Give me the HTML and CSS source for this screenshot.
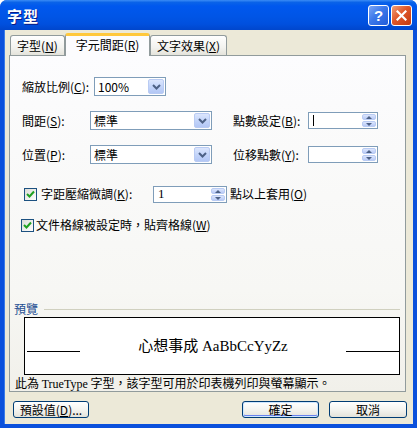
FILE: index.html
```html
<!DOCTYPE html>
<html lang="zh-Hant">
<head>
<meta charset="utf-8">
<title>字型</title>
<link rel="stylesheet" href="styles.css">
</head>
<body>
<div class="window">
  <div class="titlebar">
    <span class="title">字型</span>
    <div class="tbtns">
      <span class="tb help">?</span>
      <span class="tb close"><svg width="11" height="11" viewBox="0 0 11 11"><path d="M1.5 1.5 L9.5 9.5 M9.5 1.5 L1.5 9.5" stroke="#fff" stroke-width="2.2" stroke-linecap="square"/></svg></span>
    </div>
  </div>
  <div class="client">
    <div class="tabs">
      <div class="tab t1">字型(<u>N</u>)</div>
      <div class="tab t2 active">字元間距(<u>R</u>)</div>
      <div class="tab t3">文字效果(<u>X</u>)</div>
    </div>
    <div class="panel">
      <div class="row r1">
        <span class="lbl w72">縮放比例(<u>C</u>):</span>
        <div class="combo c-small"><span class="val">100%</span><span class="dd"><svg width="9" height="6" viewBox="0 0 9 6"><path d="M1 1 L4.5 4.5 L8 1" fill="none" stroke="#4D6185" stroke-width="2"/></svg></span></div>
      </div>
      <div class="row r2">
        <span class="lbl w68">間距(<u>S</u>):</span>
        <div class="combo c-wide"><span class="val">標準</span><span class="dd"><svg width="9" height="6" viewBox="0 0 9 6"><path d="M1 1 L4.5 4.5 L8 1" fill="none" stroke="#4D6185" stroke-width="2"/></svg></span></div>
        <span class="lbl w75 gapl">點數設定(<u>B</u>):</span>
        <div class="spin s-right"><span class="val"><span class="caret"></span></span><span class="sb"><span class="up"></span><span class="dn"></span></span></div>
      </div>
      <div class="row r3">
        <span class="lbl w68">位置(<u>P</u>):</span>
        <div class="combo c-wide"><span class="val">標準</span><span class="dd"><svg width="9" height="6" viewBox="0 0 9 6"><path d="M1 1 L4.5 4.5 L8 1" fill="none" stroke="#4D6185" stroke-width="2"/></svg></span></div>
        <span class="lbl w75 gapl">位移點數(<u>Y</u>):</span>
        <div class="spin s-right"><span class="val"></span><span class="sb"><span class="up"></span><span class="dn"></span></span></div>
      </div>
      <div class="row r4">
        <span class="chk"><svg width="9" height="9" viewBox="0 0 9 9"><path d="M1 4 L3.5 6.5 L8 1.5" fill="none" stroke="#21A121" stroke-width="2"/></svg></span>
        <span class="lbl w114">字距壓縮微調(<u>K</u>):</span>
        <div class="spin s-kern"><span class="val">1</span><span class="sb"><span class="up"></span><span class="dn"></span></span></div>
        <span class="lbl after">點以上套用(<u>O</u>)</span>
      </div>
      <div class="row r5">
        <span class="chk"><svg width="9" height="9" viewBox="0 0 9 9"><path d="M1 4 L3.5 6.5 L8 1.5" fill="none" stroke="#21A121" stroke-width="2"/></svg></span>
        <span class="lbl">文件格線被設定時，貼齊格線(<u>W</u>)</span>
      </div>
      <div class="pvhead">
        <span class="pvtitle">預覽</span>
        <span class="pvline"></span>
      </div>
      <div class="pvbox">
        <span class="bl left"></span>
        <span class="pvtext">心想事成 AaBbCcYyZz</span>
        <span class="bl right"></span>
      </div>
      <div class="footer">此為 <span class="tt">TrueType</span> 字型，該字型可用於印表機列印與螢幕顯示。</div>
    </div>
    <div class="buttons">
      <span class="btn b-def">預設值(<u>D</u>)...</span>
      <span class="spacer"></span>
      <span class="btn b-ok">確定</span>
      <span class="btn b-cancel">取消</span>
    </div>
  </div>
</div>
</body>
</html>
```

FILE: styles.css
```css
* { box-sizing: border-box; }
html, body {
  margin: 0;
  padding: 0;
  background: #fff;
}
body {
  font-family: "Noto Sans CJK TC", "Noto Sans", sans-serif;
  font-size: 12px;
  color: #000;
}
u { text-decoration: underline; text-underline-offset: 1px; }

.window {
  width: 417px;
  height: 428px;
  background: #0A50DC;
  border-radius: 7px 7px 0 0;
  display: flex;
  flex-direction: column;
  overflow: hidden;
}
.titlebar {
  height: 30px;
  flex: none;
  display: flex;
  align-items: center;
  padding: 0 5px 0 7px;
  background: linear-gradient(#3B8CF5 0%, #0A63E8 8%, #0058EE 20%, #0055E6 55%, #0050DE 80%, #0046CC 100%);
}
.title {
  color: #fff;
  font-weight: bold;
  font-size: 15px;
  letter-spacing: 1px;
  text-shadow: 1px 1px 0 #0A1883;
  flex: 1;
}
.tbtns { display: flex; gap: 2px; }
.tb {
  width: 21px;
  height: 21px;
  border: 1px solid #fff;
  border-radius: 3px;
  display: flex;
  align-items: center;
  justify-content: center;
  color: #fff;
  font-family: "Liberation Sans", sans-serif;
  font-weight: bold;
  font-size: 15px;
}
.help { background: linear-gradient(135deg, #7BA6F5 0%, #3C78EA 45%, #215CD9 100%); }
.close { background: linear-gradient(135deg, #F0A07A 0%, #E0572A 45%, #C23A10 100%); }

.client {
  flex: 1;
  margin: 0 4px 4px 4px;
  background: #ECE9D8;
  display: flex;
  flex-direction: column;
  border-left: 1px solid #3A7BE8;
}

.tabs {
  height: 26px;
  display: flex;
  align-items: flex-end;
  padding-left: 5px;
  margin-bottom: -1px;
  position: relative;
  z-index: 2;
}
.tab {
  height: 20px;
  border: 1px solid #919B9C;
  border-bottom: none;
  border-radius: 3px 3px 0 0;
  background: linear-gradient(#FFFFFF, #F3F3EF 60%, #E4E3DB);
  display: flex;
  align-items: center;
  justify-content: center;
  line-height: 14px;
  margin-bottom: 1px;
}
.t1 { width: 55px; }
.t2 { width: 85px; }
.t3 { width: 77px; }
.tab.active {
  height: 23px;
  margin-bottom: 0;
  background: #FCFCFE;
  border-top: 3px solid #FFC83C;
  padding-bottom: 2px;
  box-shadow: inset 0 0 0 0 transparent;
}

.panel {
  margin-left: 4px;
  width: 397px;
  height: 337px;
  border: 1px solid #919B9C;
  background: linear-gradient(#FCFCFE, #F7F7F4 70%, #F1F0EA);
  display: flex;
  flex-direction: column;
  position: relative;
  z-index: 1;
}

.row {
  display: flex;
  align-items: center;
  padding-left: 12px;
  line-height: 14px;
}
.r1 { margin-top: 21px; height: 19px; }
.r2 { margin-top: 15px; height: 19px; }
.r3 { margin-top: 15px; height: 19px; }
.r4 { margin-top: 21px; height: 18px; padding-left: 14px; }
.r5 { margin-top: 14px; height: 16px; padding-left: 11px; }

.lbl { white-space: nowrap; }
.w72 { width: 72px; }
.w68 { width: 68px; }
.w75 { width: 75px; }
.w114 { width: 114px; padding-left: 2px; }
.gapl { margin-left: 21px; }
.after { margin-left: 3px; }

.combo {
  height: 19px;
  border: 1px solid #7F9DB9;
  background: #fff;
  display: flex;
  align-items: stretch;
  padding: 1px;
}
.c-small { width: 72px; }
.c-wide { width: 122px; }
.combo .val {
  flex: 1;
  padding-left: 2px;
  display: flex;
  align-items: center;
}
.dd {
  width: 16px;
  border: 1px solid #B9CBF3;
  border-radius: 2px;
  background: linear-gradient(#DCE6FD, #C4D5FA 50%, #B3C7F5);
  display: flex;
  align-items: center;
  justify-content: center;
}

.spin {
  height: 17px;
  border: 1px solid #7F9DB9;
  background: #fff;
  display: flex;
  align-items: stretch;
  padding: 1px;
}
.s-right { width: 70px; }
.s-kern { width: 74px; }
.spin .val {
  flex: 1;
  padding-left: 3px;
  display: flex;
  align-items: center;
  font-family: "Liberation Serif", serif;
  font-size: 13px;
}
.caret {
  width: 1px;
  height: 11px;
  background: #000;
}
.sb {
  width: 14px;
  display: flex;
  flex-direction: column;
  gap: 1px;
}
.sb span {
  flex: 1;
  border: 1px solid #B9CBF3;
  border-radius: 2px;
  background: linear-gradient(#DCE6FD, #B8CAF6);
  position: relative;
}
.sb .up::after, .sb .dn::after {
  content: "";
  position: absolute;
  left: 3px;
  width: 0;
  height: 0;
  border-left: 3px solid transparent;
  border-right: 3px solid transparent;
}
.sb .up::after { top: 1px; border-bottom: 3px solid #4D6185; }
.sb .dn::after { top: 1px; border-top: 3px solid #4D6185; }

.chk {
  width: 13px;
  height: 13px;
  flex: none;
  border: 1px solid #1C5180;
  background: linear-gradient(135deg, #DCDCD7, #FFFFFF);
  display: flex;
  align-items: center;
  justify-content: center;
  margin-right: 2px;
}

.pvhead {
  margin-top: 69px;
  height: 14px;
  display: flex;
  align-items: center;
  padding-left: 4px;
  padding-right: 5px;
  line-height: 14px;
}
.pvtitle { color: #1F4F92; }
.pvline {
  flex: 1;
  height: 1px;
  background: #D0D0BF;
  margin-left: 6px;
}
.pvbox {
  margin: 1px 5px 0 14px;
  height: 58px;
  border: 1px solid #000;
  background: #fff;
  display: flex;
  align-items: center;
}
.pvtext {
  flex: 1;
  text-align: center;
  font-family: "Liberation Serif", "Noto Sans CJK TC", serif;
  font-size: 15px;
  line-height: 18px;
}
.bl {
  width: 53px;
  height: 1px;
  background: #000;
  margin-top: 10px;
}
.bl.left { margin-left: 2px; }
.bl.right { margin-right: 0; }

.footer {
  height: 15px;
  line-height: 15px;
  padding-left: 5px;
  margin-top: 0;
}
.footer .tt { font-family: "Liberation Serif", serif; font-size: 12px; }

.buttons {
  display: flex;
  margin-top: 9px;
  padding: 0 6px 0 8px;
  gap: 10px;
}
.spacer { flex: 1; }
.btn {
  height: 17px;
  border: 1px solid #003C74;
  border-radius: 3px;
  background: linear-gradient(#FFFFFF, #F4F4F0 50%, #E3E2DA);
  display: flex;
  align-items: center;
  justify-content: center;
  line-height: 14px;
}
.b-def { width: 76px; }
.b-ok { width: 77px; box-shadow: inset 0 0 0 1px #CEE7FF, inset 0 -1px 0 1px #6982EE; }
.b-cancel { width: 78px; }
```
